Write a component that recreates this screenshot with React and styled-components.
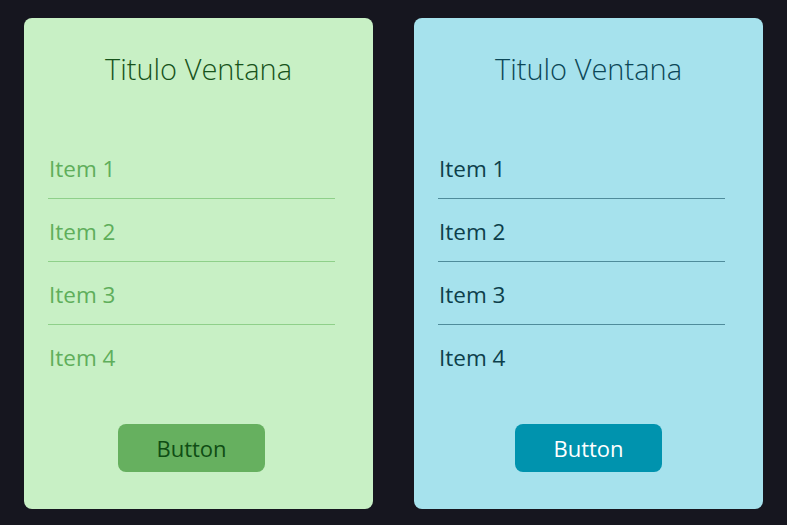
import React from 'react';
import styled, { createGlobalStyle } from 'styled-components';

const GlobalStyle = createGlobalStyle`
  html, body {
    margin: 0;
    padding: 0;
    background: #16161f;
    font-family: 'Open Sans', 'Noto Sans', sans-serif;
  }
`;

const themes = {
  green: {
    bg: '#c8f0c5',
    title: '#17531b',
    item: '#5fae5b',
    line: '#8fd08a',
    btn: '#66b05f',
    btnText: '#0f4d14',
    btnShift: '0px',
  },
  blue: {
    bg: '#a6e2ed',
    title: '#0c4757',
    item: '#0d3f4b',
    line: '#4f8c9b',
    btn: '#0093ae',
    btnText: '#ffffff',
    btnShift: '-14px',
  },
};

const Page = styled.div`
  display: flex;
  gap: 41px;
  padding: 18px 24px;
`;

const Card = styled.div`
  width: 349px;
  height: 491px;
  box-sizing: border-box;
  background: ${(p) => p.$t.bg};
  border-radius: 8px;
  padding: 31px 38px 37px 24px;
  display: flex;
  flex-direction: column;
`;

const Title = styled.h2`
  margin: 0 -14px 47px 0;
  height: 40px;
  line-height: 40px;
  text-align: center;
  font-size: 29px;
  font-weight: 300;
  color: ${(p) => p.$t.title};
`;

const List = styled.ul`
  list-style: none;
  margin: 0;
  padding: 0;
`;

const Row = styled.li`
  height: 63px;
  display: flex;
  align-items: center;
  padding-top: 2px;
  padding-left: 1px;
  box-sizing: border-box;
  font-size: 22.5px;
  color: ${(p) => p.$t.item};
  border-bottom: 1px solid ${(p) => p.$t.line};

  &:last-child {
    border-bottom: none;
  }
`;

const Footer = styled.div`
  margin-top: auto;
  margin-right: ${(p) => p.$t.btnShift};
  display: flex;
  justify-content: center;
`;

const Button = styled.button`
  width: 147px;
  height: 48px;
  border: none;
  border-radius: 8px;
  background: ${(p) => p.$t.btn};
  color: ${(p) => p.$t.btnText};
  font-family: inherit;
  font-size: 22px;
`;

const Window = ({ t }) => (
  <Card $t={t}>
    <Title $t={t}>Titulo Ventana</Title>
    <List>
      {['Item 1', 'Item 2', 'Item 3', 'Item 4'].map((item) => (
        <Row $t={t} key={item}>{item}</Row>
      ))}
    </List>
    <Footer $t={t}>
      <Button $t={t}>Button</Button>
    </Footer>
  </Card>
);

export default function App() {
  return (
    <>
      <GlobalStyle />
      <Page>
        <Window t={themes.green} />
        <Window t={themes.blue} />
      </Page>
    </>
  );
}
